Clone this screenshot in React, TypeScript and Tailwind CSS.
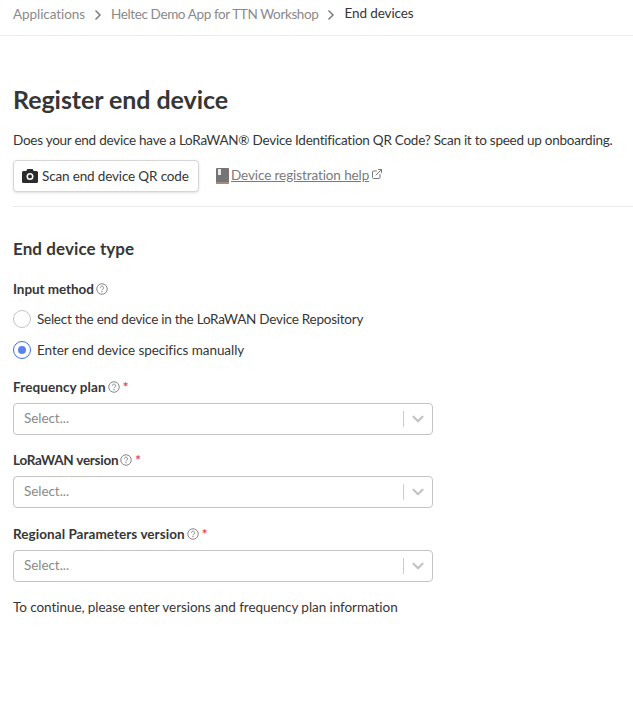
import { ChevronRight, ChevronDown, ExternalLink } from "lucide-react";

function Help() {
  return (
    <svg viewBox="0 0 24 24" className="ml-[2px] h-3 w-3 shrink-0 text-[#7a7a7a]" fill="none" stroke="currentColor" strokeWidth="1.8">
      <circle cx="12" cy="12" r="10.5" />
      <path d="M8.8 9.4a3.2 3.2 0 1 1 5 2.7c-1.1.8-1.8 1.3-1.8 2.6" />
      <circle cx="12" cy="17.6" r="0.5" fill="currentColor" />
    </svg>
  );
}

function FieldLabel({ text, required, className }: { text: string; required?: boolean; className?: string }) {
  return (
    <div className={`flex h-[18px] items-center font-bold text-[#363636] ${className ?? ""}`}>
      {text}
      <Help />
      {required && <span className="ml-[3px] text-[#e5484d]">*</span>}
    </div>
  );
}

function SelectBox() {
  return (
    <div className="mt-[7px] flex h-8 w-[420px] items-center rounded border border-[#c4c4c4] bg-white pl-[10px] text-[#8a8a8a]">
      <span className="flex-1 pb-[2px]">Select...</span>
      <span className="h-4 w-px bg-[#cccccc]" />
      <ChevronDown className="mx-[5px] h-[18px] w-[18px] text-[#c4c4c4]" strokeWidth={3} />
    </div>
  );
}

export default function App() {
  return (
    <div
      className="min-h-[701px] bg-white text-[13.5px] tracking-[-0.06px] text-[#363636]"
      style={{ fontFamily: "Lato, sans-serif" }}
    >
      <nav className="flex h-9 items-center border-b border-[#ebebeb] pb-[6px] pl-[13px] text-[#8a8a8a]">
        <span className="tracking-[-0.07px]">Applications</span>
        <ChevronRight className="mx-[5px] h-4 w-4 text-[#7f7f7f]" strokeWidth={2.5} />
        <span className="tracking-[-0.38px]">Heltec Demo App for TTN Workshop</span>
        <ChevronRight className="mx-[5px] h-4 w-4 text-[#7f7f7f]" strokeWidth={2.5} />
        <span className="-mt-[2px] tracking-[-0.1px] text-[#363636]">End devices</span>
      </nav>
      <main className="pl-[13px]">
        <h1 className="mt-[45px] text-[25px] font-bold leading-[36px]">Register end device</h1>
        <p className="mt-[13px] whitespace-nowrap leading-[20px] tracking-[-0.25px]">
          Does your end device have a LoRaWAN® Device Identification QR Code? Scan it to speed up onboarding.
        </p>
        <div className="mt-[10px] flex items-center">
          <button className="flex h-8 w-[186px] items-center rounded border border-[#d6d6d6] bg-white pl-2 tracking-[-0.15px] shadow-sm">
            <svg viewBox="0 0 16 14" className="mr-1 h-[14px] w-4">
              <path
                fill="#2b2b2b"
                fillRule="evenodd"
                d="M5.4 0h5.2l1.2 2H14.5A1.5 1.5 0 0 1 16 3.5v9a1.5 1.5 0 0 1-1.5 1.5h-13A1.5 1.5 0 0 1 0 12.5v-9A1.5 1.5 0 0 1 1.5 2h2.7zM8 4a3.5 3.5 0 1 0 0 7a3.5 3.5 0 0 0 0-7z"
              />
              <circle cx="8" cy="7.5" r="2" fill="#2b2b2b" />
            </svg>
            Scan end device QR code
          </button>
          <div className="ml-[17px] flex items-center tracking-[-0.1px] text-[#7a7a7a]">
            <svg viewBox="0 0 13 16" className="mr-[2px] h-4 w-[13px]">
              <rect width="13" height="16" rx="1" fill="#757575" />
              <rect y="14" width="13" height="2" fill="#a98c78" />
              <rect x="2" y="1" width="3" height="6" fill="#e8e8e8" />
            </svg>
            <span className="-mt-[2px] underline">Device registration help</span>
            <ExternalLink className="mb-[4px] ml-[2px] h-3 w-3" />
          </div>
        </div>
        <div className="mt-[14px] border-t border-[#ebebeb]" />
        <h2 className="mt-[30px] text-[17px] font-bold leading-[24px] tracking-[0.08px]">End device type</h2>
        <div className="mt-[19px]">
          <FieldLabel text="Input method" />
          <label className="mt-[11px] flex h-5 items-center tracking-[-0.25px]">
            <span className="mr-[6px] h-[18px] w-[18px] rounded-full border border-[#c4c4c4] bg-white" />
            Select the end device in the LoRaWAN Device Repository
          </label>
          <label className="mt-[11px] flex h-5 items-center">
            <span className="mr-[6px] flex h-[18px] w-[18px] items-center justify-center rounded-full border border-[#3d6fe0] bg-white">
              <span className="h-2 w-2 rounded-full bg-[#5b83ee]" />
            </span>
            Enter end device specifics manually
          </label>
        </div>
        <div className="mt-[18px]">
          <FieldLabel text="Frequency plan" required className="tracking-[0.1px]" />
          <SelectBox />
        </div>
        <div className="mt-4">
          <FieldLabel text="LoRaWAN version" required className="tracking-[-0.25px]" />
          <SelectBox />
        </div>
        <div className="mt-[17px]">
          <FieldLabel text="Regional Parameters version" required className="tracking-[0.06px]" />
          <SelectBox />
        </div>
        <p className="mt-[15px] leading-[20px]">To continue, please enter versions and frequency plan information</p>
      </main>
    </div>
  );
}
